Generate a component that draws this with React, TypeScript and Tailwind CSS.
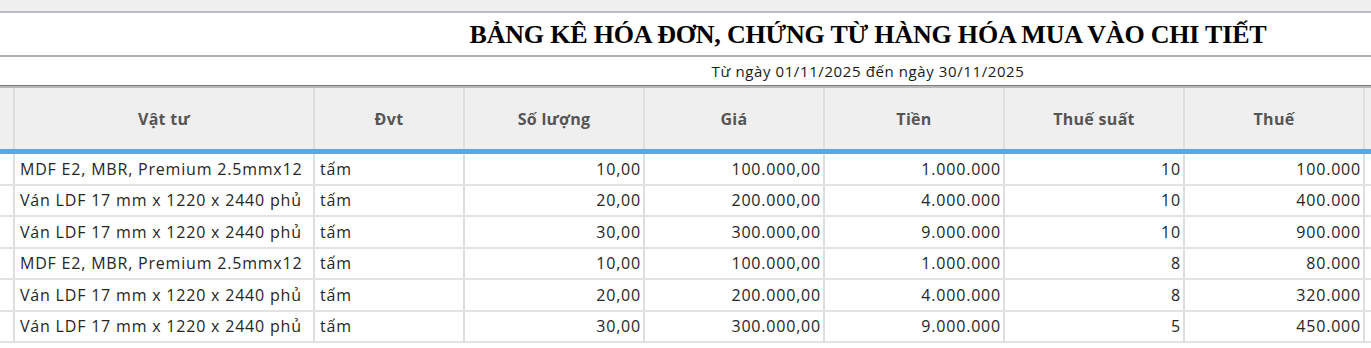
import React from 'react';

interface Row {
  name: string;
  unit: string;
  qty: string;
  price: string;
  amount: string;
  rate: string;
  tax: string;
}

const rows: Row[] = [
  { name: 'MDF E2, MBR, Premium 2.5mmx12', unit: 'tấm', qty: '10,00', price: '100.000,00', amount: '1.000.000', rate: '10', tax: '100.000' },
  { name: 'Ván LDF 17 mm x 1220 x 2440 phủ', unit: 'tấm', qty: '20,00', price: '200.000,00', amount: '4.000.000', rate: '10', tax: '400.000' },
  { name: 'Ván LDF 17 mm x 1220 x 2440 phủ', unit: 'tấm', qty: '30,00', price: '300.000,00', amount: '9.000.000', rate: '10', tax: '900.000' },
  { name: 'MDF E2, MBR, Premium 2.5mmx12', unit: 'tấm', qty: '10,00', price: '100.000,00', amount: '1.000.000', rate: '8', tax: '80.000' },
  { name: 'Ván LDF 17 mm x 1220 x 2440 phủ', unit: 'tấm', qty: '20,00', price: '200.000,00', amount: '4.000.000', rate: '8', tax: '320.000' },
  { name: 'Ván LDF 17 mm x 1220 x 2440 phủ', unit: 'tấm', qty: '30,00', price: '300.000,00', amount: '9.000.000', rate: '5', tax: '450.000' },
];

const headers = ['Vật tư', 'Đvt', 'Số lượng', 'Giá', 'Tiền', 'Thuế suất', 'Thuế'];

const gridCols = 'grid grid-cols-[15px_300px_150px_180px_180px_180px_180px_180px_1fr]';
const cell = 'border-r-2 border-[#dedede] flex items-center overflow-hidden whitespace-pre';
// trailing letter-spacing already adds a bit of room on the right
const num = `${cell} justify-end pr-[2px]`;

const App: React.FC = () => {
  return (
    <div className="w-[1371px] h-[348px] bg-white overflow-hidden font-['Open_Sans',sans-serif]">
      {/* toolbar strip */}
      <div className="h-[11px] bg-[#f0f0f0]" />
      <div className="h-[2px] bg-[#bcbcc4]" />

      {/* title */}
      <div className="h-[42px] bg-white flex items-center justify-center pl-[365px]">
        <h1 className="font-['Liberation_Serif',serif] font-bold text-[26px] text-black tracking-[-0.2px]">
          BẢNG KÊ HÓA ĐƠN, CHỨNG TỪ HÀNG HÓA MUA VÀO CHI TIẾT
        </h1>
      </div>
      <div className="h-[2px] bg-[#b0b0b4]" />

      {/* date range */}
      <div className="h-[28px] bg-white flex items-center justify-center pl-[365px]">
        <span className="text-[15px] tracking-[0.6px] text-[#1a1a1a]">Từ ngày 01/11/2025 đến ngày 30/11/2025</span>
      </div>
      <div className="h-[1px] bg-[#7c7c7c]" />
      <div className="h-[2px] bg-[#b8b8b8]" />

      {/* header row */}
      <div className={`${gridCols} h-[61px] bg-[#efefef]`}>
        <div className={cell} />
        {headers.map((h) => (
          <div key={h} className={`${cell} justify-center text-[16px] tracking-[0.3px] font-bold text-[#555555]`}>
            {h}
          </div>
        ))}
        <div />
      </div>
      <div className="h-[5px] bg-[#5aa8dc]" />

      {/* data rows */}
      {rows.map((r, i) => (
        <div key={i} className={`${gridCols} h-[31.5px] border-b-2 border-[#e2e2e2] text-[16px] tracking-[0.8px] text-[#262626]`}>
          <div className={cell} />
          <div className={`${cell} pl-[5px]`}>{r.name}</div>
          <div className={`${cell} pl-[5px]`}>{r.unit}</div>
          <div className={num}>{r.qty}</div>
          <div className={num}>{r.price}</div>
          <div className={num}>{r.amount}</div>
          <div className={num}>{r.rate}</div>
          <div className={num}>{r.tax}</div>
          <div />
        </div>
      ))}
    </div>
  );
};

export default App;
